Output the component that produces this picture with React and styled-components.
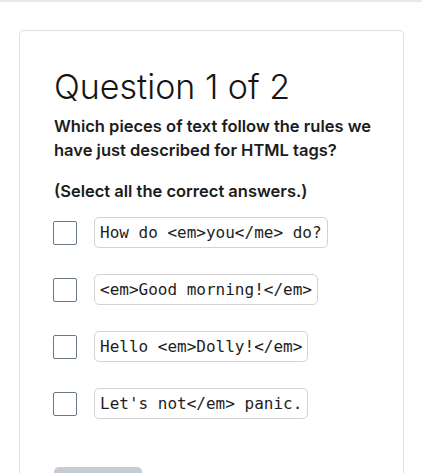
import React from "react";
import styled, { createGlobalStyle } from "styled-components";

const GlobalStyle = createGlobalStyle`
  html, body {
    margin: 0;
    padding: 0;
    background: #ffffff;
  }
  body {
    font-family: Inter, "Noto Sans", "Liberation Sans", sans-serif;
    color: #1b1b1b;
  }
`;

const TopRule = styled.div`
  height: 2px;
  background: #e6e8eb;
`;

const Page = styled.main`
  padding: 28px 18px 0 19px;
`;

const Card = styled.section`
  border: 1px solid #e0e0e0;
  border-bottom: none;
  border-radius: 5px 5px 0 0;
  padding: 36px 20px 0 34px;
  min-height: 460px;
`;

const Title = styled.h1`
  margin: 0;
  font-family: Inter, "Noto Sans", sans-serif;
  font-weight: 300;
  font-size: 34px;
  line-height: 40px;
  letter-spacing: 0;
  color: #151515;
`;

const Prompt = styled.p`
  margin: ${(p) => p.$top}px 0 0 0;
  max-width: 330px;
  font-size: 16.5px;
  line-height: 24px;
  font-weight: 600;
  color: #1c1c1c;
`;

const Options = styled.ul`
  list-style: none;
  margin: 14px 0 0 0;
  padding: 0;
  display: flex;
  flex-direction: column;
  gap: 26px;
`;

const Option = styled.li`
  display: flex;
  align-items: center;
  gap: 17px;
  height: 31px;
`;

const Box = styled.span`
  box-sizing: border-box;
  width: 24px;
  height: 24px;
  flex: none;
  margin-left: -1px;
  border: 1.5px solid #6d7886;
  border-radius: 2px;
  background: #fff;
`;

const Code = styled.code`
  box-sizing: border-box;
  height: 31px;
  padding: 5px 5px;
  border: 1px solid #d2d2d2;
  border-radius: 5px;
  font-family: "DejaVu Sans Mono", "Liberation Mono", monospace;
  font-size: 16px;
  line-height: 19px;
  color: #1e1e1e;
  white-space: pre;
`;

const Submit = styled.button`
  margin-top: 48px;
  width: 88px;
  height: 40px;
  border: none;
  border-radius: 5px;
  background: #c6ccd3;
`;

const answers = [
  "How do <em>you</me> do?",
  "<em>Good morning!</em>",
  "Hello <em>Dolly!</em>",
  "Let's not</em> panic.",
];

export default function App() {
  return (
    <>
      <GlobalStyle />
      <TopRule />
      <Page>
        <Card>
          <Title>Question 1 of 2</Title>
          <Prompt $top={7}>
            Which pieces of text follow the rules we have just described for
            HTML tags?
          </Prompt>
          <Prompt $top={17}>(Select all the correct answers.)</Prompt>
          <Options>
            {answers.map((a) => (
              <Option key={a}>
                <Box role="checkbox" aria-checked="false" />
                <Code>{a}</Code>
              </Option>
            ))}
          </Options>
          <Submit aria-label="Submit" />
        </Card>
      </Page>
    </>
  );
}
